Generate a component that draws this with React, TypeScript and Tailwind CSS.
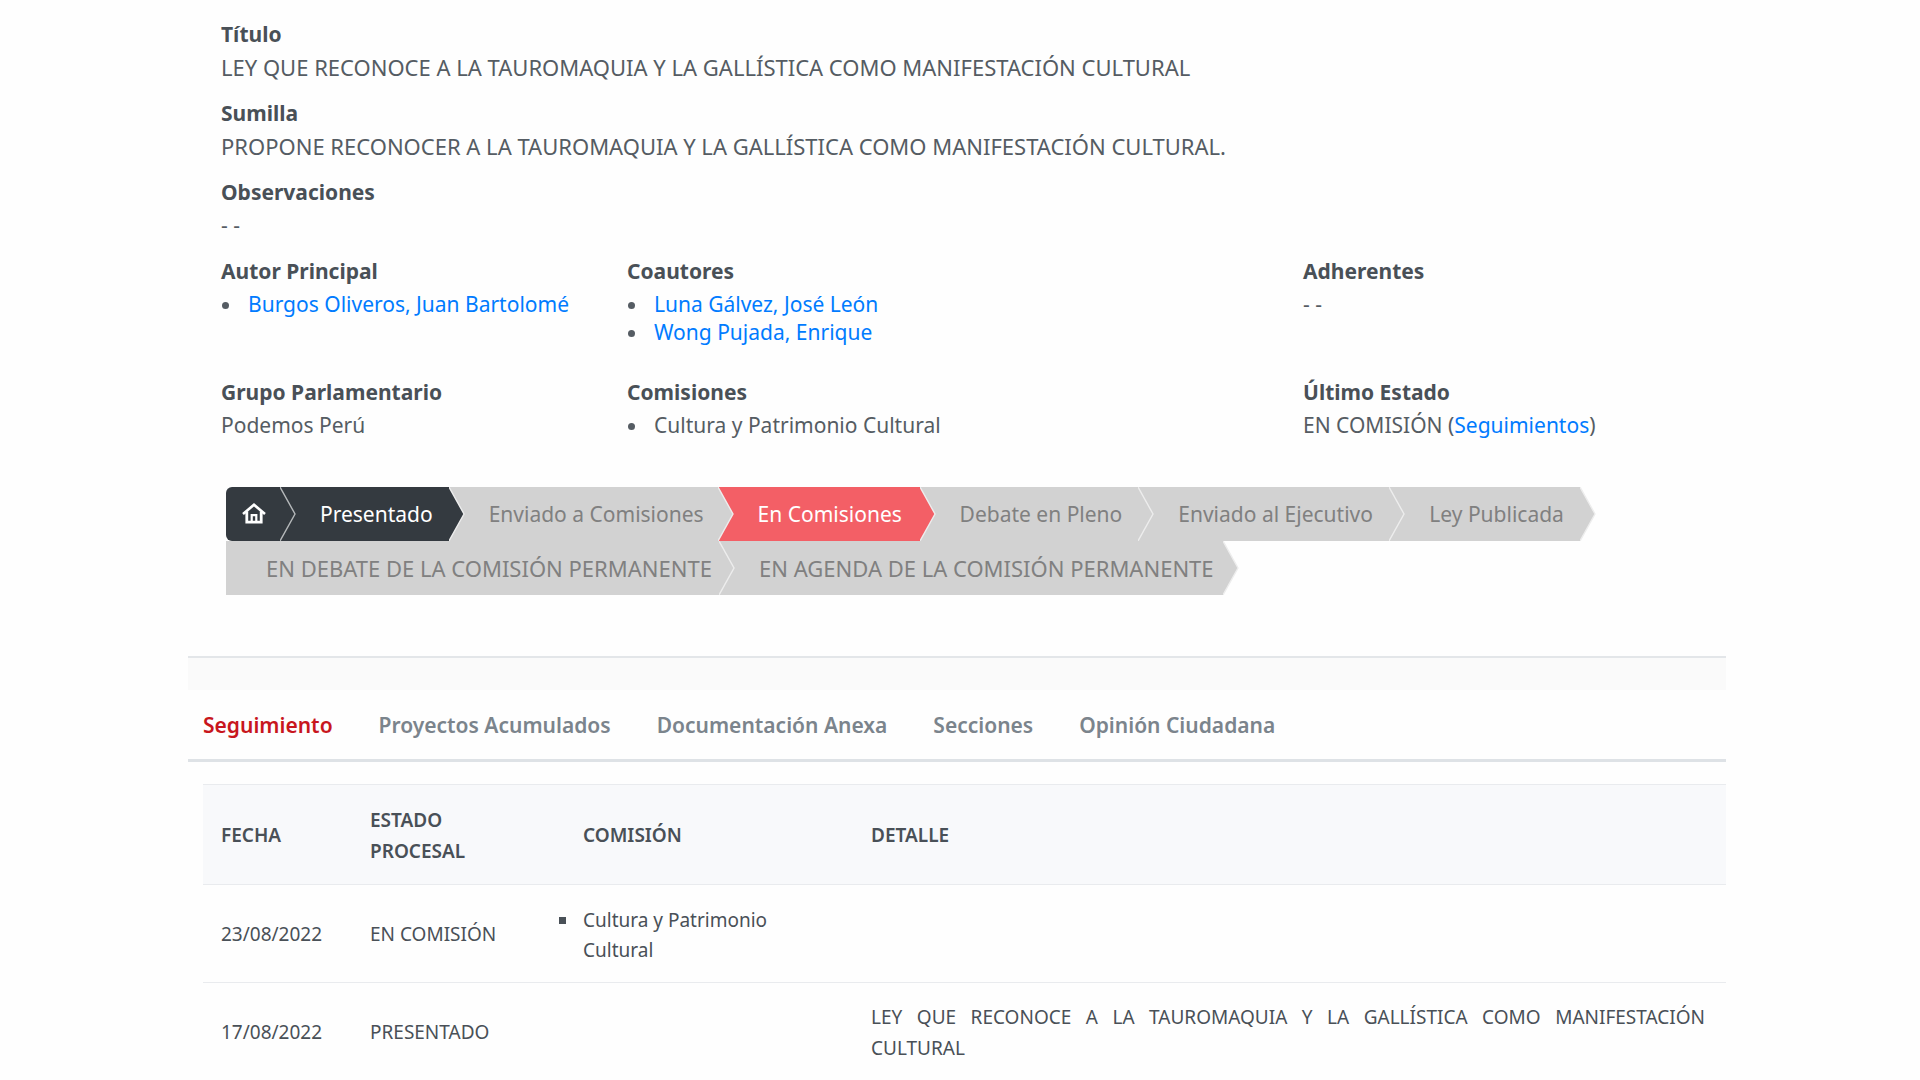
import React from 'react';

type StepProps = {
  label: string;
  size: string;
  body: string;
  arrow: string;
};

const GREY = 'bg-[#d2d2d2] text-[#808080]';

const firstRow: StepProps[] = [
  { label: 'Presentado', size: 'min-w-[168px] pr-4', body: 'bg-[#343a40] text-white', arrow: 'fill-[#343a40]' },
  { label: 'Enviado a Comisiones', size: 'pr-[14px]', body: GREY, arrow: 'fill-[#d2d2d2]' },
  { label: 'En Comisiones', size: 'min-w-[202px] pr-4', body: 'bg-[#f35f66] text-white', arrow: 'fill-[#f35f66]' },
  { label: 'Debate en Pleno', size: 'pr-4', body: GREY, arrow: 'fill-[#d2d2d2]' },
  { label: 'Enviado al Ejecutivo', size: 'min-w-[251px] pr-4', body: GREY, arrow: 'fill-[#d2d2d2]' },
  { label: 'Ley Publicada', size: 'min-w-[191px] pr-4', body: GREY, arrow: 'fill-[#d2d2d2]' },
];

const secondRow: StepProps[] = [
  {
    label: 'EN DEBATE DE LA COMISIÓN PERMANENTE',
    size: 'min-w-[493px] pr-1 text-[22px]',
    body: GREY,
    arrow: 'fill-[#d2d2d2]',
  },
  {
    label: 'EN AGENDA DE LA COMISIÓN PERMANENTE',
    size: 'min-w-[504px] pr-1 text-[22px]',
    body: GREY,
    arrow: 'fill-[#d2d2d2]',
  },
];

const tabs = ['Seguimiento', 'Proyectos Acumulados', 'Documentación Anexa', 'Secciones', 'Opinión Ciudadana'];

const Arrow: React.FC<{ fill: string; stroke?: string }> = ({ fill, stroke = 'stroke-[#ededed]' }) => (
  <svg className="absolute top-0 left-full z-10 h-full w-4" viewBox="0 0 16 54" aria-hidden="true">
    <path className={fill} d="M-1 0H0L15 27L0 54H-1Z" />
    <path className={stroke} d="M0 0L15 27L0 54" fill="none" strokeWidth="1.4" />
  </svg>
);

const Step: React.FC<StepProps> = ({ label, size, body, arrow }) => (
  <li className={`relative flex h-[54px] items-center pl-10 whitespace-nowrap ${size} ${body}`}>
    {label}
    <Arrow fill={arrow} />
  </li>
);

const Field: React.FC<{ title: string; children: React.ReactNode }> = ({ title, children }) => (
  <div>
    <h2 className="font-bold">{title}</h2>
    <div className="mt-[5px] text-[#555c63]">{children}</div>
  </div>
);

const Link: React.FC<{ children: React.ReactNode }> = ({ children }) => (
  <a href="#" className="text-[#007bff]">
    {children}
  </a>
);

export default function App() {
  return (
    <div className="min-h-screen bg-[#fefefe] pr-[194px] pl-[188px] font-['Noto_Sans',sans-serif] text-[21px] leading-7 text-[#495057]">
      <section className="pt-5 pl-[33px]">
        <div className="flex flex-col gap-[18px]">
          <Field title="Título">
            <p className="text-[22px]">
              LEY QUE RECONOCE A LA TAUROMAQUIA Y LA GALLÍSTICA COMO MANIFESTACIÓN CULTURAL
            </p>
          </Field>
          <Field title="Sumilla">
            <p className="text-[22px]">
              PROPONE RECONOCER A LA TAUROMAQUIA Y LA GALLÍSTICA COMO MANIFESTACIÓN CULTURAL.
            </p>
          </Field>
          <Field title="Observaciones">- -</Field>
        </div>
        <div className="mt-[18px] grid grid-cols-[406fr_676fr_423fr] gap-y-8">
          <Field title="Autor Principal">
            <ul className="list-disc pl-[22px]">
              <li className="pl-[5px]">
                <Link>Burgos Oliveros, Juan Bartolomé</Link>
              </li>
            </ul>
          </Field>
          <Field title="Coautores">
            <ul className="list-disc pl-[22px]">
              <li className="pl-[5px]">
                <Link>Luna Gálvez, José León</Link>
              </li>
              <li className="pl-[5px]">
                <Link>Wong Pujada, Enrique</Link>
              </li>
            </ul>
          </Field>
          <Field title="Adherentes">- -</Field>
          <Field title="Grupo Parlamentario">Podemos Perú</Field>
          <Field title="Comisiones">
            <ul className="list-disc pl-[22px]">
              <li className="pl-[5px]">Cultura y Patrimonio Cultural</li>
            </ul>
          </Field>
          <Field title="Último Estado">
            EN COMISIÓN (<Link>Seguimientos</Link>)
          </Field>
        </div>
      </section>

      <nav className="mt-12 ml-[38px]" aria-label="Estado">
        <ol className="flex">
          <li className="relative h-[54px] w-[54px] rounded-l-md bg-[#343a40]">
            <a href="#" aria-label="Inicio" className="flex h-full items-center pl-4">
              <svg className="size-6" viewBox="0 0 24 24" fill="none" stroke="white">
                <path d="M1 12L12 2.800L23 12" strokeWidth="2.6" />
                <path d="M4.800 9.500V20.200H19.200V9.500" strokeWidth="2.8" />
                <path d="M9.700 20V13.200H14.300V20" strokeWidth="2.2" />
              </svg>
            </a>
            <Arrow fill="fill-[#343a40]" stroke="stroke-[#b5b8ba]" />
          </li>
          {firstRow.map((step) => (
            <Step key={step.label} {...step} />
          ))}
        </ol>
        <ol className="flex">
          {secondRow.map((step) => (
            <Step key={step.label} {...step} />
          ))}
        </ol>
      </nav>

      <div className="mt-[61px] h-[34px] border-t-2 border-[#e3e6e9] bg-[#fafafa]" />

      <nav className="flex h-[72px] items-center gap-[46px] border-b-3 border-[#dee2e6] pl-[15px] font-semibold">
        {tabs.map((tab, i) => (
          <a key={tab} href="#" className={i === 0 ? 'text-[#c8161d]' : 'text-[#7b848c]'}>
            {tab}
          </a>
        ))}
      </nav>

      <div className="pt-[22px] pl-[15px]">
        <table className="w-full table-fixed text-left text-[19px] leading-[31px]">
          <thead className="border-y border-[#e9ebee] bg-[#f8f9fb]">
            <tr className="h-[100px]">
              <th className="w-[149px] pt-0.5 pl-[18px] font-semibold">FECHA</th>
              <th className="w-[213px] pt-0.5 pr-12 pl-[18px] font-semibold">ESTADO PROCESAL</th>
              <th className="w-[288px] pt-0.5 pl-[18px] font-semibold">COMISIÓN</th>
              <th className="pt-0.5 pl-[18px] font-semibold">DETALLE</th>
            </tr>
          </thead>
          <tbody>
            <tr className="h-[98px] border-b border-[#e9ebee]">
              <td className="pt-0.5 pl-[18px]">23/08/2022</td>
              <td className="pt-0.5 pl-[18px]">EN COMISIÓN</td>
              <td className="pt-0.5 pr-12 pl-[14px]">
                <ul className="list-[square] leading-[30px]">
                  <li className="pl-1">Cultura y Patrimonio Cultural</li>
                </ul>
              </td>
              <td />
            </tr>
            <tr className="h-[98px] border-b border-[#e9ebee]">
              <td className="pt-0.5 pl-[18px]">17/08/2022</td>
              <td className="pt-0.5 pl-[18px]">PRESENTADO</td>
              <td />
              <td className="pt-0.5 pr-[21px] pl-[18px] text-justify">
                LEY QUE RECONOCE A LA TAUROMAQUIA Y LA GALLÍSTICA COMO MANIFESTACIÓN CULTURAL
              </td>
            </tr>
          </tbody>
        </table>
      </div>
    </div>
  );
}
